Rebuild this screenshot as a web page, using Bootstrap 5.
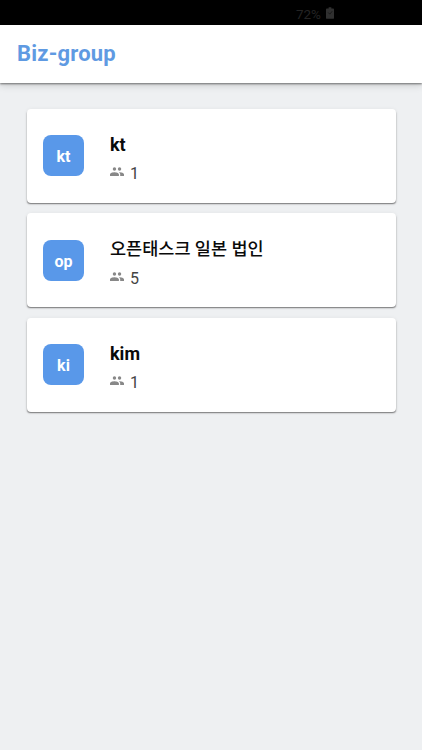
<!DOCTYPE html>
<html lang="ko">
<head>
<meta charset="utf-8">
<meta name="viewport" content="width=device-width, initial-scale=1">
<title>Biz-group</title>
<link href="https://cdn.jsdelivr.net/npm/bootstrap@5.3.0/dist/css/bootstrap.min.css" rel="stylesheet">
<style>
body{background:#eef0f2;font-family:Roboto,"Noto Sans CJK KR",sans-serif;min-height:100vh;overflow:hidden}
.status-bar{height:25px;background:#000;color:#242424;font-size:13.5px;line-height:20px;padding:4px 88px 0 0;gap:5px}
.status-bar svg{margin-top:3px}
.app-bar{height:58px;padding:0 17px;box-shadow:0 1px 2px rgba(0,0,0,.5),0 3px 7px rgba(0,0,0,.13)}
.app-title{color:#5f9ae2;font-size:22px;font-weight:700;line-height:26px;letter-spacing:.2px}
.group-list{padding:25.5px 26px 0 26.5px;gap:10.5px}
.group-card{height:94px;border:0;border-radius:4px;padding:0 16.5px;gap:26px;box-shadow:0 1.5px 1.5px -.5px rgba(0,0,0,.5),0 0 4px rgba(0,0,0,.05)}
.avatar{width:41px;height:41px;border-radius:8px;background:#5998e9;font-size:16px;font-weight:700;padding-top:3px}
.group-info{padding-top:5px}
.group-name{font-size:18px;font-weight:700;line-height:24px;color:#0a0a0a;padding-top:1px;margin-bottom:-1px!important}
.group-name:lang(ko){font-size:17.5px;font-weight:500;padding-top:0;margin-bottom:0!important}
.members{font-size:16px;line-height:20px;color:#444;gap:6px;margin-top:8px}
.members svg{margin-bottom:5px}
</style>
</head>
<body>
<svg class="d-none"><symbol id="people" viewBox="1 5 22 14"><circle cx="8" cy="8" r="2.700"/><circle cx="16" cy="8" r="2.700"/><path d="M8 13c-2.330 0-7 1.170-7 3.500V19h14v-2.500C15 14.170 10.330 13 8 13zm8 0c-.290 0-.620.020-.970.050C16.190 13.890 17 15.020 17 16.500V19h6v-2.500c0-2.330-4.670-3.500-7-3.500z"/></symbol></svg>
<div class="status-bar d-flex justify-content-end align-items-start">
  <span>72%</span>
  <svg width="8" height="12" viewBox="0 0 9 13" fill="#303030"><path d="M3 0h3v1.500h2q1 0 1 1V12q0 1-1 1H1q-1 0-1-1V2.500q0-1 1-1h2z"/><path d="m2.500 6 1.800 1.800L7 4.500" fill="none" stroke="#161616"/></svg>
</div>
<header class="app-bar bg-white d-flex align-items-center"><h1 class="app-title m-0">Biz-group</h1></header>
<main class="group-list d-flex flex-column">
  <div class="card group-card flex-row align-items-center">
    <div class="avatar text-white d-flex align-items-center justify-content-center">kt</div>
    <div class="group-info"><h2 class="group-name m-0" lang="en">kt</h2><div class="members d-flex align-items-center"><svg width="14" height="9" fill="#888"><use href="#people"/></svg><span>1</span></div></div>
  </div>
  <div class="card group-card flex-row align-items-center">
    <div class="avatar text-white d-flex align-items-center justify-content-center">op</div>
    <div class="group-info"><h2 class="group-name m-0" lang="ko">오픈태스크 일본 법인</h2><div class="members d-flex align-items-center"><svg width="14" height="9" fill="#888"><use href="#people"/></svg><span>5</span></div></div>
  </div>
  <div class="card group-card flex-row align-items-center">
    <div class="avatar text-white d-flex align-items-center justify-content-center">ki</div>
    <div class="group-info"><h2 class="group-name m-0" lang="en">kim</h2><div class="members d-flex align-items-center"><svg width="14" height="9" fill="#888"><use href="#people"/></svg><span>1</span></div></div>
  </div>
</main>
<script src="https://cdn.jsdelivr.net/npm/bootstrap@5.3.0/dist/js/bootstrap.bundle.min.js"></script>
</body>
</html>
